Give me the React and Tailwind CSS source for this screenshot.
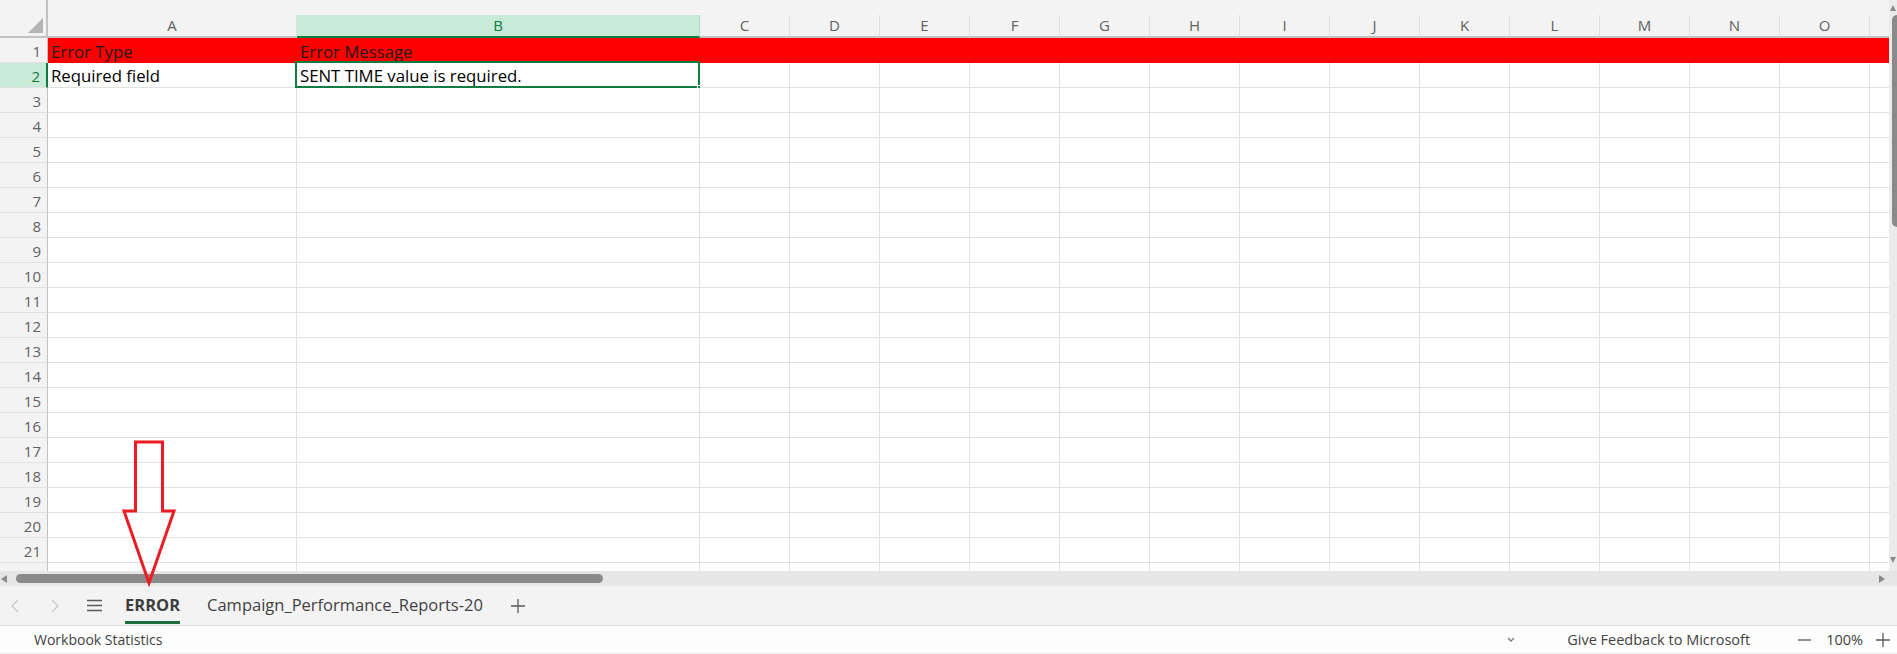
import React from 'react';

const columns = [
    { label: 'A', width: 'w-[249px]' },
    { label: 'B', width: 'w-[403px]', selected: true },
    ...['C', 'D', 'E', 'F', 'G', 'H', 'I', 'J', 'K', 'L', 'M', 'N', 'O'].map((label) => ({ label, width: 'w-[90px]' })),
    { label: '', width: 'w-[90px]' },
];

const rows = Array.from({ length: 22 }, (_, i) => i + 1);

const cellText = {
    1: { A: 'Error Type', B: 'Error Message' },
    2: { A: 'Required field', B: 'SENT TIME value is required.' },
};

const ColumnHeader = () => (
    <div className="flex h-[38px] shrink-0">
        {/* select-all corner */}
        <div className="relative w-[48px] shrink-0 bg-[#f3f3f3] border-r-2 border-b-2 border-[#c2c2c2]">
            <svg className="absolute left-[28px] top-[18px]" width="15" height="15" viewBox="0 0 15 15">
                <polygon points="15,0 15,15 0,15" fill="#b4b4b4" />
            </svg>
        </div>
        {columns.map((col, i) => (
            <div key={i} className={`${col.width} shrink-0 flex flex-col bg-[#f3f3f3]`}>
                <div className="h-[15px]" />
                <div
                    className={`h-[23px] flex items-center justify-center text-[15px] border-r ${
                        col.selected
                            ? 'bg-[#caead8] text-[#0e7a3e] border-[#a6dcbd] border-b-2 border-b-[#107c41]'
                            : 'text-[#616161] border-[#dedede] border-b-2 border-b-[#c2c2c2]'
                    }`}
                >
                    {col.label}
                </div>
            </div>
        ))}
    </div>
);

const Row = ({ n }) => {
    const isActive = n === 2;
    const isRed = n === 1;
    return (
        <div className="flex h-[25px] shrink-0">
            <div
                className={`w-[48px] shrink-0 flex items-end justify-end pr-[6px] pb-[3px] text-[15px] leading-none border-b border-b-[#e1e1e1] ${
                    isActive
                        ? 'bg-[#caead8] text-[#0e7a3e] border-r-2 border-r-[#107c41]'
                        : 'bg-[#f3f3f3] text-[#616161] border-r border-r-[#c2c2c2]'
                }`}
            >
                {n}
            </div>
            {columns.map((col, i) => {
                const text = cellText[n]?.[col.label];
                const selected = isActive && col.label === 'B';
                return (
                    <div
                        key={i}
                        className={`${col.width} shrink-0 relative flex items-end pl-[3px] pb-[2px] text-[16.75px] leading-none whitespace-nowrap ${
                            isRed ? 'bg-[#ff0000] text-[#1a1a1a]' : 'bg-white text-black border-r border-b border-[#e1e1e1]'
                        }`}
                    >
                        {text}
                        {selected && (
                            <>
                                <div className="absolute -left-[2px] -top-[2px] -right-[1px] -bottom-[1px] border-2 border-[#107c41]" />
                                <div className="absolute -right-[4px] -bottom-[4px] w-[6px] h-[6px] bg-[#107c41] border border-white" />
                            </>
                        )}
                    </div>
                );
            })}
        </div>
    );
};

const App = () => {
    return (
        <div className="relative w-[1897px] h-[654px] flex flex-col bg-white overflow-hidden font-['Open_Sans',sans-serif]">
            {/* grid + vertical scrollbar */}
            <div className="flex h-[571px] shrink-0">
                <div className="w-[1889px] shrink-0 flex flex-col overflow-hidden">
                    <ColumnHeader />
                    {rows.map((n) => (
                        <Row key={n} n={n} />
                    ))}
                </div>
                <div className="w-[8px] shrink-0 flex flex-col items-end bg-[#ebebeb]">
                    <svg className="mt-[5px] mr-[1px]" width="6" height="6" viewBox="0 0 6 6">
                        <polygon points="3,0 6,6 0,6" fill="#8a8a8a" />
                    </svg>
                    <div className="mt-[4px] w-[5px] h-[212px] rounded-l-full bg-[#8a8a8a]" />
                    <div className="flex-1" />
                    <svg className="mb-[8px] mr-[1px]" width="6" height="6" viewBox="0 0 6 6">
                        <polygon points="0,0 6,0 3,6" fill="#8a8a8a" />
                    </svg>
                </div>
            </div>

            {/* horizontal scrollbar */}
            <div className="h-[15px] shrink-0 flex items-center bg-[#e6e6e6]">
                <svg className="ml-[1px]" width="6" height="8" viewBox="0 0 6 8">
                    <polygon points="6,0 6,8 0,4" fill="#8a8a8a" />
                </svg>
                <div className="ml-[9px] w-[587px] h-[9px] rounded-full bg-[#8a8a8a]" />
                <div className="flex-1" />
                <svg className="mr-[12px]" width="6" height="8" viewBox="0 0 6 8">
                    <polygon points="0,0 6,4 0,8" fill="#8a8a8a" />
                </svg>
            </div>

            {/* sheet tabs */}
            <div className="h-[40px] shrink-0 flex items-center bg-[#f3f3f3] border-b border-[#e1e1e1] text-[#424242]">
                <svg className="ml-[11px]" width="8" height="14" viewBox="0 0 8 14">
                    <polyline points="7,1 1,7 7,13" fill="none" stroke="#c8c8c8" strokeWidth="1.2" />
                </svg>
                <svg className="ml-[32px]" width="8" height="14" viewBox="0 0 8 14">
                    <polyline points="1,1 7,7 1,13" fill="none" stroke="#c8c8c8" strokeWidth="1.2" />
                </svg>
                <svg className="ml-[28px]" width="15" height="13" viewBox="0 0 15 13">
                    <path d="M0 1.5h15M0 6.5h15M0 11.5h15" stroke="#5a5a5a" strokeWidth="1.4" />
                </svg>
                <div className="ml-[23px] relative h-full flex items-center">
                    <span className="text-[16.5px] font-bold text-[#3d3d3d]">ERROR</span>
                    <div className="absolute left-0 right-0 bottom-[1px] h-[3px] bg-[#1e6e42]" />
                </div>
                <span className="ml-[27px] text-[16.5px] text-[#424242]">Campaign_Performance_Reports-20</span>
                <svg className="ml-[28px]" width="14" height="14" viewBox="0 0 14 14">
                    <path d="M7 0v14M0 7h14" stroke="#5a5a5a" strokeWidth="1.3" />
                </svg>
            </div>

            {/* status bar */}
            <div className="flex-1 flex items-center bg-[#fdfdfd] text-[14.5px] text-[#424242] border-b border-[#ececec]">
                <span className="ml-[34px] text-[14px]">Workbook Statistics</span>
                <div className="flex-1" />
                <svg width="8" height="6" viewBox="0 0 8 6">
                    <polyline points="1,1 4,4 7,1" fill="none" stroke="#7a7a7a" strokeWidth="1.3" />
                </svg>
                <span className="ml-[52px]">Give Feedback to Microsoft</span>
                <svg className="ml-[48px]" width="13" height="2" viewBox="0 0 13 2">
                    <path d="M0 1h13" stroke="#5a5a5a" strokeWidth="1.3" />
                </svg>
                <span className="ml-[15px]">100%</span>
                <svg className="ml-[13px] mr-[7px]" width="14" height="14" viewBox="0 0 14 14">
                    <path d="M7 0v14M0 7h14" stroke="#5a5a5a" strokeWidth="1.3" />
                </svg>
            </div>

            {/* callout arrow pointing at the ERROR tab */}
            <svg className="absolute left-[120px] top-[438px]" width="58" height="150" viewBox="0 0 58 150">
                <polygon
                    points="15.5,4 42.5,4 42.5,73 54,73 29,145 4,73 15.5,73"
                    fill="none"
                    stroke="#ed1c24"
                    strokeWidth="3"
                />
            </svg>
        </div>
    );
};

export default App;
